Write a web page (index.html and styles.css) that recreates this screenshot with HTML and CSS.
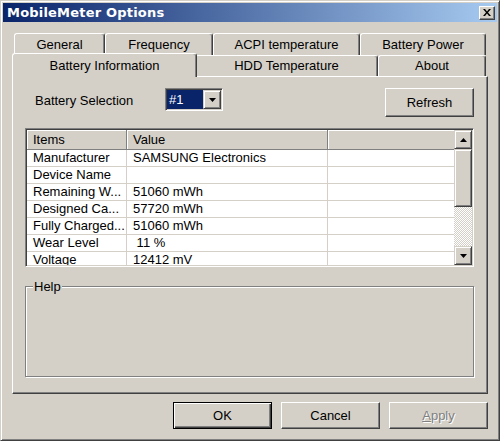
FILE: index.html
```html
<!DOCTYPE html>
<html>
	<head>
		<meta charset="UTF-8">
		<title>MobileMeter Options</title>
		<link rel="stylesheet" href="styles.css">
	</head>
	<body>
		<div class="window">
			<div class="titlebar">
				<span class="title">MobileMeter Options</span>
				<div class="close-btn">
					<svg width="8" height="7" viewBox="0 0 8 7">
						<path d="M0 0h2l2 2.5l2-2.5h2l-3 3.5l3 3.5h-2l-2-2.5l-2 2.5h-2l3-3.5z" fill="#000" />
					</svg>
				</div>
			</div>

			<div class="dialog">
				<div class="tabs">
					<div class="tab-row tab-back">
						<div class="tab w-general">General</div>
						<div class="tab w-freq">Frequency</div>
						<div class="tab w-acpi">ACPI temperature</div>
						<div class="tab w-power">Battery Power</div>
					</div>
					<div class="tab-row tab-front">
						<div class="tab w-info active">Battery Information</div>
						<div class="tab w-hdd">HDD Temperature</div>
						<div class="tab w-about">About</div>
					</div>
				</div>

				<div class="panel">
					<div class="top-row">
						<span class="label">Battery Selection</span>
						<div class="combo">
							<span class="combo-value">#1</span>
							<span class="combo-btn">
								<svg width="7" height="4" viewBox="0 0 7 4"><path d="M0 0h7l-3.5 4z" fill="#000" /></svg>
							</span>
						</div>
						<div class="btn refresh-btn">Refresh</div>
					</div>

					<div class="listview">
						<div class="lv-body">
							<div class="lv-head">
								<div class="col col-item">Items</div>
								<div class="col col-value">Value</div>
								<div class="col col-extra"></div>
							</div>
							<div class="lv-row">
								<div class="col col-item">Manufacturer</div>
								<div class="col col-value">SAMSUNG Electronics</div>
								<div class="col col-extra"></div>
							</div>
							<div class="lv-row">
								<div class="col col-item">Device Name</div>
								<div class="col col-value"></div>
								<div class="col col-extra"></div>
							</div>
							<div class="lv-row">
								<div class="col col-item">Remaining W...</div>
								<div class="col col-value">51060 mWh</div>
								<div class="col col-extra"></div>
							</div>
							<div class="lv-row">
								<div class="col col-item">Designed Ca...</div>
								<div class="col col-value">57720 mWh</div>
								<div class="col col-extra"></div>
							</div>
							<div class="lv-row">
								<div class="col col-item">Fully Charged...</div>
								<div class="col col-value">51060 mWh</div>
								<div class="col col-extra"></div>
							</div>
							<div class="lv-row">
								<div class="col col-item">Wear Level</div>
								<div class="col col-value">&nbsp;11 %</div>
								<div class="col col-extra"></div>
							</div>
							<div class="lv-row">
								<div class="col col-item">Voltage</div>
								<div class="col col-value">12412 mV</div>
								<div class="col col-extra"></div>
							</div>
						</div>
						<div class="scrollbar">
							<div class="sb-btn">
								<svg width="7" height="4" viewBox="0 0 7 4"><path d="M3.5 0l3.5 4h-7z" fill="#000" /></svg>
							</div>
							<div class="sb-thumb"></div>
							<div class="sb-track"></div>
							<div class="sb-btn">
								<svg width="7" height="4" viewBox="0 0 7 4"><path d="M0 0h7l-3.5 4z" fill="#000" /></svg>
							</div>
						</div>
					</div>

					<fieldset class="help">
						<legend>Help</legend>
					</fieldset>
				</div>

				<div class="footer-btns">
					<div class="btn default-btn">OK</div>
					<div class="btn">Cancel</div>
					<div class="btn disabled"><u>A</u>pply</div>
				</div>
			</div>
		</div>
	</body>
</html>
```

FILE: styles.css
```css
* {
	margin: 0;
	padding: 0;
	box-sizing: border-box;
}

body {
	font-family: "Liberation Sans", Arial, sans-serif;
	font-size: 13px;
	color: #000;
	background: #d4d0c8;
}

.window {
	width: 500px;
	height: 441px;
	background: #d4d0c8;
	border: 1px solid;
	border-color: #d4d0c8 #404040 #404040 #d4d0c8;
	box-shadow: inset 1px 1px #fff, inset -1px -1px #808080;
	padding: 2px;
}

.titlebar {
	height: 19px;
	display: flex;
	align-items: center;
	justify-content: space-between;
	padding: 0 2px 0 4px;
	background: linear-gradient(to right, #0a246a, #a6caf0);
}

.title {
	font-family: "DejaVu Sans", sans-serif;
	font-weight: bold;
	font-size: 13px;
	letter-spacing: 0.2px;
	color: #fff;
}

.close-btn {
	width: 16px;
	height: 14px;
	display: flex;
	align-items: center;
	justify-content: center;
	background: #d4d0c8;
	border: 1px solid;
	border-color: #fff #404040 #404040 #fff;
	box-shadow: inset -1px -1px #808080;
}

.close-btn svg {
	display: block;
	margin-left: -1px;
}

.dialog {
	padding: 11px 9px 0;
}

/* tabs */
.tab-row {
	display: flex;
	padding-left: 2px;
}

.tab-back {
	height: 22px;
}

.tab-front {
	height: 21px;
}

.tab {
	height: 100%;
	display: flex;
	align-items: center;
	justify-content: center;
	background: #d4d0c8;
	border-top: 1px solid #fff;
	border-left: 1px solid #fff;
	border-right: 1px solid #404040;
	border-radius: 3px 3px 0 0;
	box-shadow: inset -1px 0 #808080;
	padding-bottom: 1px;
}

.tab.active {
	position: relative;
	z-index: 2;
	height: 24px;
	margin: -2px -2px -1px;
	padding-bottom: 0;
}

.w-general { width: 91px; }
.w-freq { width: 108px; }
.w-acpi { width: 147px; }
.w-power { width: 126px; }
.w-info { width: 185px; }
.w-hdd { width: 183px; }
.w-about { width: 108px; }

/* panel */
.panel {
	width: 476px;
	height: 318px;
	border: 1px solid;
	border-color: #fff #404040 #404040 #fff;
	box-shadow: inset -1px -1px #808080;
	padding: 11px 13px 0 12px;
}

.top-row {
	display: flex;
	align-items: flex-start;
	height: 29px;
}

.label {
	width: 130px;
	margin: 5px 0 0 10px;
	line-height: 16px;
}

.combo {
	width: 58px;
	height: 23px;
	display: flex;
	border: 1px solid;
	border-color: #808080 #fff #fff #808080;
	box-shadow: inset 1px 1px #404040, inset -1px -1px #d4d0c8;
	padding: 1px;
	background: #fff;
}

.combo-value {
	flex: 1;
	background: #0a246a;
	color: #fff;
	line-height: 19px;
	padding-left: 2px;
}

.combo-btn {
	width: 18px;
	height: 19px;
	display: flex;
	align-items: center;
	justify-content: center;
	background: #d4d0c8;
	border: 1px solid;
	border-color: #d4d0c8 #404040 #404040 #d4d0c8;
	box-shadow: inset 1px 1px #fff, inset -1px -1px #808080;
}

.btn {
	width: 99px;
	height: 27px;
	display: flex;
	align-items: center;
	justify-content: center;
	background: #d4d0c8;
	border: 1px solid;
	border-color: #fff #404040 #404040 #fff;
	box-shadow: inset -1px -1px #808080;
}

.refresh-btn {
	width: 89px;
	height: 29px;
	margin-left: auto;
}

/* list view */
.listview {
	margin-top: 11px;
	height: 139px;
	display: flex;
	border: 1px solid;
	border-color: #808080 #fff #fff #808080;
	box-shadow: inset 1px 1px #404040, inset -1px -1px #d4d0c8;
	padding: 1px;
	background: #fff;
}

.lv-body {
	flex: 1;
	overflow: hidden;
}

.lv-head {
	display: flex;
	height: 20px;
	background: #d4d0c8;
	border-bottom: 1px solid #808080;
}

.lv-head .col {
	line-height: 19px;
	box-shadow: inset 1px 1px #fff;
	border-right: 1px solid #808080;
}

.lv-head .col-extra {
	border-right: none;
}

.lv-row {
	display: flex;
	height: 17px;
	border-bottom: 1px solid #d4d0c8;
}

.col {
	padding-left: 6px;
	white-space: nowrap;
	overflow: hidden;
	line-height: 16px;
}

.col-item {
	width: 100px;
	border-right: 1px solid #d4d0c8;
}

.col-value {
	width: 201px;
	border-right: 1px solid #d4d0c8;
}

.col-extra {
	flex: 1;
}

.scrollbar {
	width: 18px;
	display: flex;
	flex-direction: column;
}

.sb-btn,
.sb-thumb {
	background: #d4d0c8;
	border: 1px solid;
	border-color: #d4d0c8 #404040 #404040 #d4d0c8;
	box-shadow: inset 1px 1px #fff, inset -1px -1px #808080;
}

.sb-btn {
	height: 19px;
	display: flex;
	align-items: center;
	justify-content: center;
}

.sb-thumb {
	height: 58px;
}

.sb-track {
	flex: 1;
	background: repeating-conic-gradient(#fff 0 25%, #d4d0c8 0 50%) 0 0 / 2px 2px;
}

/* help group */
.help {
	margin-top: 12px;
	height: 98px;
	border: 1px solid #808080;
	box-shadow: inset 1px 1px #fff, 1px 1px #fff;
	padding: 0;
}

.help legend {
	margin-left: 7px;
	padding: 0 1px;
	line-height: 15px;
	background: #d4d0c8;
}

/* bottom buttons */
.footer-btns {
	display: flex;
	justify-content: flex-end;
	gap: 9px;
	margin-top: 8px;
}

.default-btn {
	border: 1px solid #000;
	box-shadow: inset 1px 1px #fff, inset -1px -1px #404040, inset -2px -2px #808080;
}

.disabled {
	color: #808080;
	text-shadow: 1px 1px #fff;
}
```
